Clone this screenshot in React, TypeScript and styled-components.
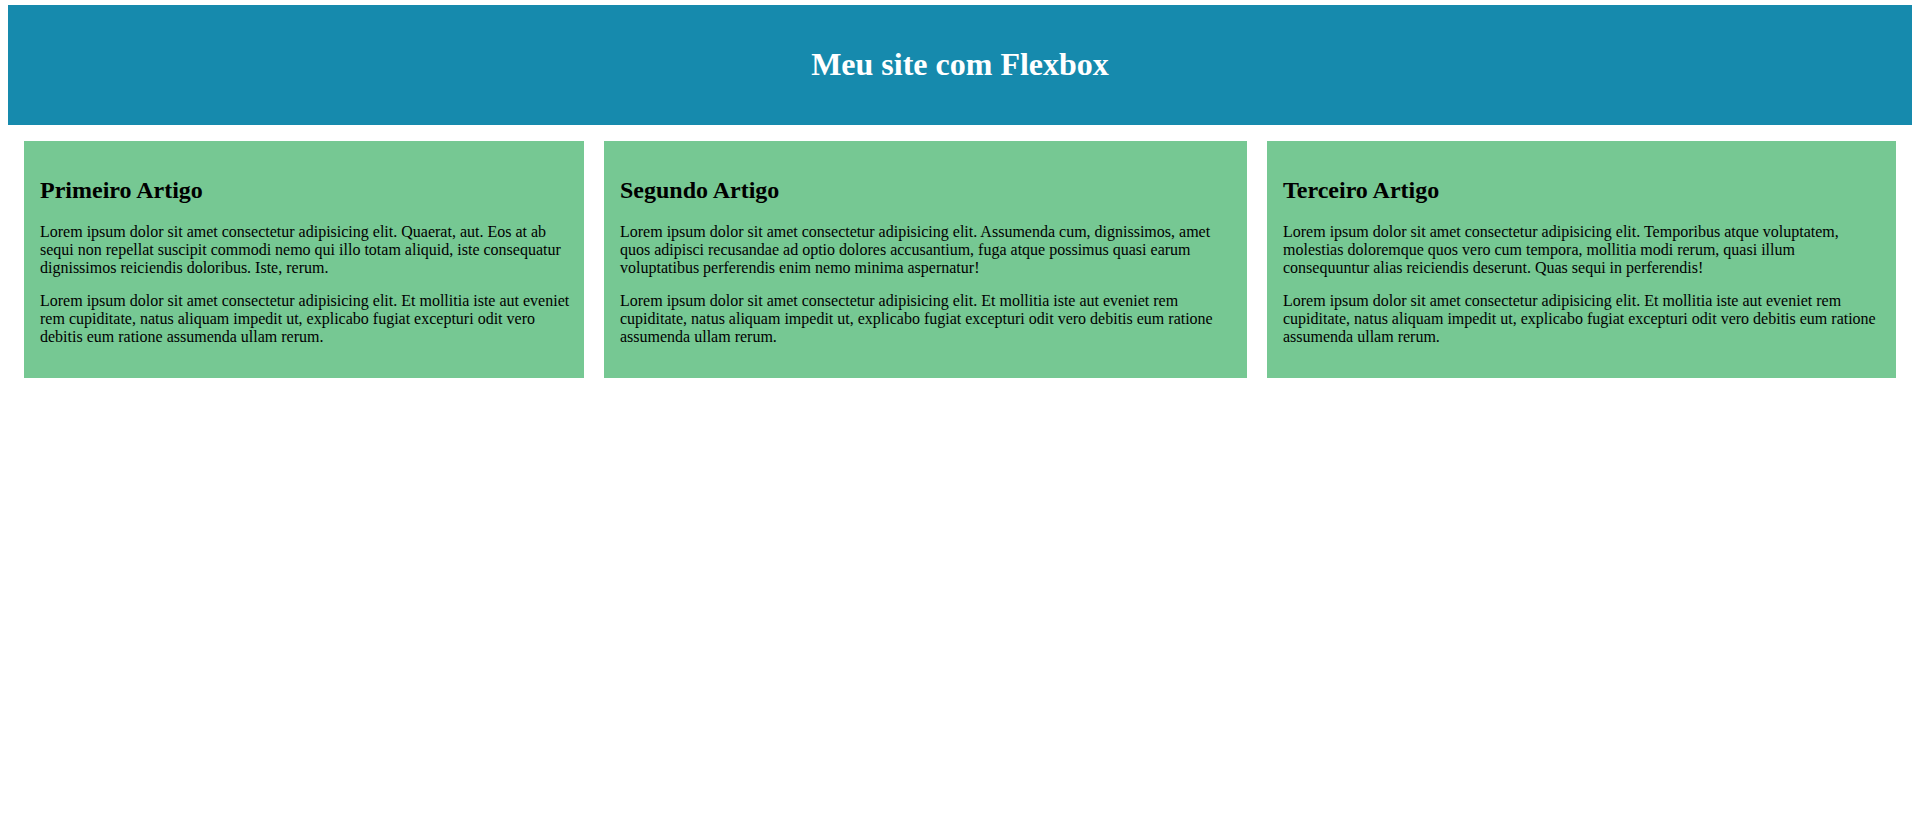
import React from "react";
import styled, { createGlobalStyle } from "styled-components";

const GlobalStyle = createGlobalStyle`
  html, body {
    background: #ffffff;
  }
  body {
    margin: 5px 8px 8px 8px;
    font-family: "Liberation Serif", "Times New Roman", serif;
    font-size: 16px;
    line-height: 1.107;
    color: #000000;
  }
`;

const Header = styled.header`
  height: 120px;
  background: #168aad;
  display: flex;
  align-items: center;
  justify-content: center;
`;

const Title = styled.h1`
  margin: 0;
  font-size: 32px;
  font-weight: bold;
  color: #ffffff;
  line-height: 1.107;
`;

const Main = styled.main`
  display: flex;
  align-items: stretch;
  gap: 20px;
  padding: 16px;
`;

const Article = styled.article<{ $grow: number }>`
  box-sizing: content-box;
  flex: ${(p) => p.$grow} 1 0;
  min-width: 0;
  background: #76c893;
  padding: 16px 12px 16px 16px;
`;

const Heading = styled.h2`
  margin: 0.83em 0;
  font-size: 24px;
  font-weight: bold;
  line-height: 1.107;
`;

const Paragraph = styled.p`
  margin: 16px 0;
  font-size: 16px;
  line-height: 1.107;
`;

const second =
  "Lorem ipsum dolor sit amet consectetur adipisicing elit. Et mollitia iste aut eveniet rem cupiditate, natus aliquam impedit ut, explicabo fugiat excepturi odit vero debitis eum ratione assumenda ullam rerum.";

const articles = [
  {
    title: "Primeiro Artigo",
    grow: 532,
    text: [
      "Lorem ipsum dolor sit amet consectetur adipisicing elit. Quaerat, aut. Eos at ab sequi non repellat suscipit commodi nemo qui illo totam aliquid, iste consequatur dignissimos reiciendis doloribus. Iste, rerum.",
      second,
    ],
  },
  {
    title: "Segundo Artigo",
    grow: 615,
    text: [
      "Lorem ipsum dolor sit amet consectetur adipisicing elit. Assumenda cum, dignissimos, amet quos adipisci recusandae ad optio dolores accusantium, fuga atque possimus quasi earum voluptatibus perferendis enim nemo minima aspernatur!",
      second,
    ],
  },
  {
    title: "Terceiro Artigo",
    grow: 601,
    text: [
      "Lorem ipsum dolor sit amet consectetur adipisicing elit. Temporibus atque voluptatem, molestias doloremque quos vero cum tempora, mollitia modi rerum, quasi illum consequuntur alias reiciendis deserunt. Quas sequi in perferendis!",
      second,
    ],
  },
];

export default function App() {
  return (
    <>
      <GlobalStyle />
      <Header>
        <Title>Meu site com Flexbox</Title>
      </Header>
      <Main>
        {articles.map((a) => (
          <Article key={a.title} $grow={a.grow}>
            <Heading>{a.title}</Heading>
            {a.text.map((t, i) => (
              <Paragraph key={i}>{t}</Paragraph>
            ))}
          </Article>
        ))}
      </Main>
    </>
  );
}
